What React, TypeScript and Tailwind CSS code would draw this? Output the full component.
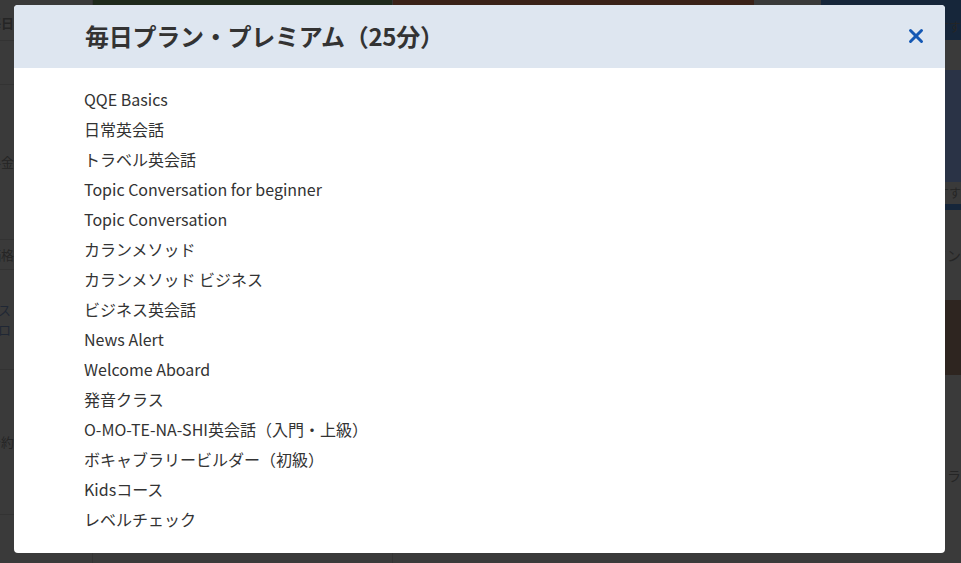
import { X } from "lucide-react";

const courses = [
  "QQE Basics",
  "日常英会話",
  "トラベル英会話",
  "Topic Conversation for beginner",
  "Topic Conversation",
  "カランメソッド",
  "カランメソッド ビジネス",
  "ビジネス英会話",
  "News Alert",
  "Welcome Aboard",
  "発音クラス",
  "O-MO-TE-NA-SHI英会話（入門・上級）",
  "ボキャブラリービルダー（初級）",
  "Kidsコース",
  "レベルチェック",
];

const font = { fontFamily: '"Noto Sans CJK JP", "Noto Sans", sans-serif' };

export default function App() {
  return (
    <div className="relative w-[961px] h-[563px] overflow-hidden bg-[#3a3a3a]" style={font}>
      {/* dimmed page behind the modal */}
      <div className="flex h-full">
        <div className="w-[92px] flex flex-col text-[13px] text-[#252525] whitespace-nowrap overflow-hidden">
          <div className="h-[5px]" />
          <div className="h-[36px] flex items-center pl-[-10px] border-b border-[#333] font-bold -ml-[12px]">毎日プ</div>
          <div className="h-[44px] border-b border-[#333]" />
          <div className="h-[155px] flex items-center border-b border-[#333] -ml-[12px]">料金表</div>
          <div className="h-[30px] flex items-center border-b border-[#333] -ml-[12px]">価格</div>
          <div className="h-[100px] flex flex-col justify-center border-b border-[#333] text-[#1f2734] leading-5 -ml-[28px]">
            <span>レッス</span>
            <span>ッフロ</span>
          </div>
          <div className="h-[145px] flex items-center border-b border-[#333] -ml-[12px]">予約可</div>
          <div className="flex-1" />
        </div>
        <div className="w-[300px] flex flex-col border-l border-[#333]">
          <div className="h-[5px] bg-[#1f2a1c]" />
          <div className="flex-1" />
        </div>
        <div className="w-[362px] flex flex-col border-l border-[#333]">
          <div className="h-[5px] bg-[#3a2218]" />
          <div className="flex-1" />
        </div>
        <div className="w-[67px] flex flex-col">
          <div className="h-[5px] bg-[#3a3a3a]" />
          <div className="flex-1" />
        </div>
        <div className="flex-1 flex flex-col text-[12px] text-[#252525] whitespace-nowrap">
          <div className="h-[40px] bg-[#16263a] flex items-end justify-end pb-1">すす</div>
          <div className="h-[30px] bg-[#3a3a3a]" />
          <div className="h-[112px] bg-[#2d3540] flex">
            <div className="flex-1 bg-[#3a3526]" />
            <div className="flex-1 bg-[#2a3346]" />
          </div>
          <div className="h-[22px] flex items-center justify-end">すす</div>
          <div className="h-[6px] bg-[#16263a]" />
          <div className="h-[90px] flex items-center justify-end text-[14px]">イン</div>
          <div className="h-[75px] bg-[#2e2520]" />
          <div className="h-[80px]" />
          <div className="h-[40px] flex items-center justify-end text-[14px]">ラ</div>
          <div className="flex-1" />
        </div>
      </div>

      {/* modal */}
      <div className="absolute left-[14px] top-[5px] w-[931px] h-[548px] bg-white rounded-[4px] overflow-hidden flex flex-col">
        <div className="h-[63px] shrink-0 bg-[#dee6f0] flex items-center justify-between pl-[71px] pr-[17px] pb-[2px]">
          <h2 className="text-[24px] font-bold text-[#333333] tracking-[-0.01em]">毎日プラン・プレミアム（25分）</h2>
          <button className="w-[24px] h-[24px] flex items-center justify-center text-[#1458b4]">
            <X size={22} strokeWidth={3.2} />
          </button>
        </div>
        <ul className="pl-[70px] pt-[16px] text-[16px] leading-[30px] text-[#333333]">
          {courses.map((c) => (
            <li key={c}>{c}</li>
          ))}
        </ul>
      </div>
    </div>
  );
}
